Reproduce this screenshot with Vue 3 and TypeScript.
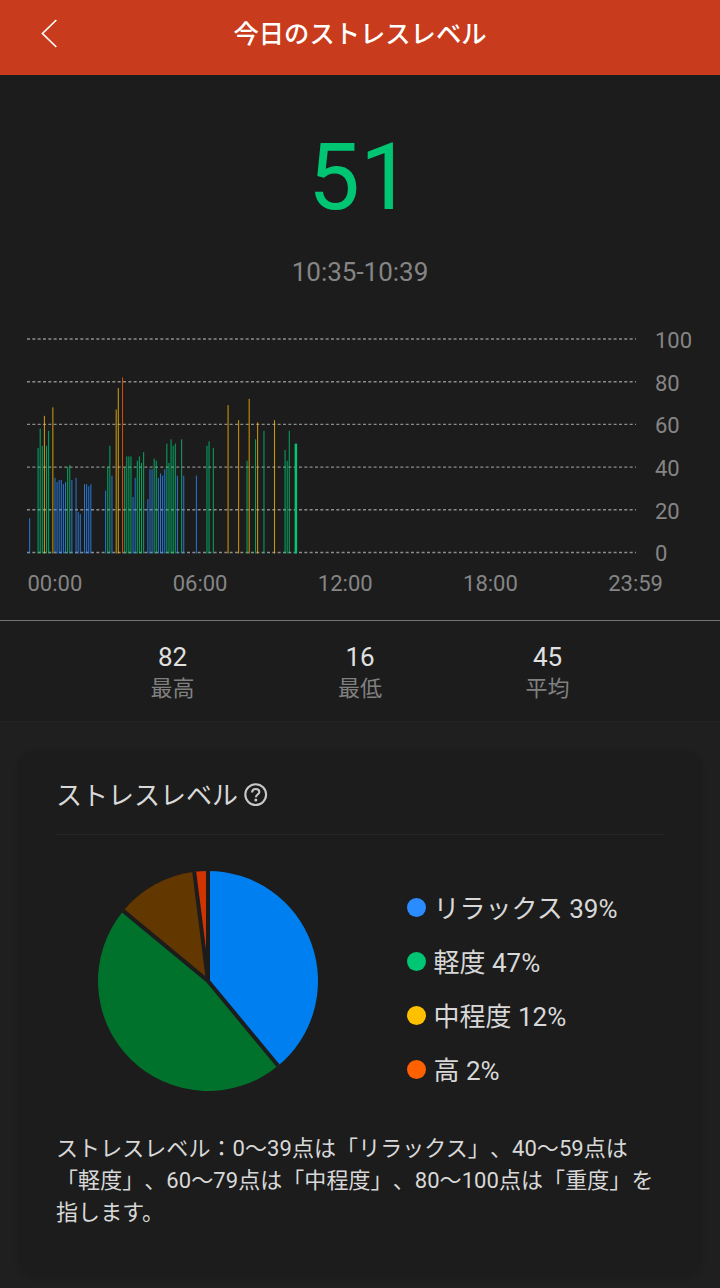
<script setup lang="ts">
type Level = 'relax' | 'mild' | 'medium' | 'high'

// Readings per five-minute slot of the day: [slot, value]
const readings: [number, number][] = [
  [1, 16], [5, 49], [6, 58], [7, 50], [8, 64], [9, 50], [10, 57], [12, 68],
  [13, 35], [14, 33], [15, 34], [16, 34], [17, 32], [18, 33], [19, 40], [20, 41], [21, 34],
  [23, 35], [24, 19], [25, 18], [27, 32], [28, 32], [29, 31], [30, 32],
  [37, 29], [38, 40], [39, 50], [40, 36], [42, 67], [43, 77], [45, 82],
  [46, 40], [47, 45], [48, 45], [49, 45], [50, 26], [51, 35], [52, 43], [53, 45], [54, 42], [55, 47],
  [57, 25], [58, 39], [59, 39], [60, 44], [61, 43], [62, 35], [63, 37], [64, 36], [65, 39],
  [66, 51], [67, 42], [68, 53], [69, 50], [70, 51], [71, 36], [73, 53], [74, 36], [80, 36],
  [85, 50], [86, 52], [88, 49], [95, 69], [100, 62], [104, 43], [105, 72], [108, 53], [109, 61],
  [112, 57], [117, 62], [122, 48], [123, 43], [124, 57],
]

const levelOf = (v: number): Level =>
  v >= 80 ? 'high' : v >= 60 ? 'medium' : v >= 40 ? 'mild' : 'relax'

const unit = 2.135
const zeroY = 218.5
const bars = readings.map(([slot, value]) => ({
  x: 27 + slot * 2.111,
  y: zeroY - value * unit,
  h: value * unit + 1,
  level: levelOf(value),
}))

const ticks = [100, 80, 60, 40, 20, 0]
const gridY = (t: number) => zeroY - t * unit
const hours = ['00:00', '06:00', '12:00', '18:00', '23:59']

const stats = [
  { value: 82, label: '最高' },
  { value: 16, label: '最低' },
  { value: 45, label: '平均' },
]

const legend: { level: Level; name: string; share: number }[] = [
  { level: 'relax', name: 'リラックス', share: 39 },
  { level: 'mild', name: '軽度', share: 47 },
  { level: 'medium', name: '中程度', share: 12 },
  { level: 'high', name: '高', share: 2 },
]

const radius = 110
const point = (share: number) => {
  const a = (share / 100) * Math.PI * 2
  return { x: 112 + radius * Math.sin(a), y: 112 - radius * Math.cos(a) }
}
let total = 0
const slices = legend.map(({ level, share }) => {
  const a = point(total)
  total += share
  const b = point(total)
  return { level, a, d: `M112 112L${a.x} ${a.y}A${radius} ${radius} 0 0 1 ${b.x} ${b.y}Z` }
})
</script>

<template>
  <div class="screen">
    <header class="bar">
      <svg class="back" width="20" height="32" viewBox="0 0 20 32">
        <path d="M17.3 3L3.5 16.5L17.3 30" />
      </svg>
      <h1>今日のストレスレベル</h1>
    </header>

    <section class="current">
      <div class="score">51</div>
      <div class="period">10:35-10:39</div>
    </section>

    <section class="chart">
      <div class="plot">
        <svg width="640" height="222" viewBox="0 0 640 222">
          <line v-for="t in ticks" :key="t" class="grid" x1="27" x2="636" :y1="gridY(t)" :y2="gridY(t)" />
          <rect v-for="b in bars" :key="b.x" :class="['reading', b.level]" :x="b.x" :y="b.y" width="1.05" :height="b.h" />
          <rect class="latest" x="294.6" :y="zeroY - 51 * unit" width="2.5" :height="51 * unit + 1" />
        </svg>
        <div class="scale"><span v-for="t in ticks" :key="t">{{ t }}</span></div>
      </div>
      <div class="hours"><span v-for="h in hours" :key="h">{{ h }}</span></div>
    </section>

    <section class="stats">
      <div v-for="s in stats" :key="s.label" class="stat">
        <b>{{ s.value }}</b><span>{{ s.label }}</span>
      </div>
    </section>

    <section class="card">
      <div class="card-head">
        <h2>ストレスレベル</h2>
        <svg width="24" height="24" viewBox="0 0 24 24">
          <circle cx="11.7" cy="11.6" r="10.4" />
          <path d="M8.1 9.4C8.1 7.2 9.6 6 11.7 6S15.3 7.2 15.3 9.1C15.3 11.4 11.9 11.7 11.9 14.2" />
          <circle class="dot" cx="11.8" cy="17" r="1.5" />
        </svg>
      </div>
      <div class="breakdown">
        <svg width="224" height="224" viewBox="0 0 224 224">
          <path v-for="s in slices" :key="s.level" :class="['slice', s.level]" :d="s.d" />
          <line v-for="s in slices" :key="s.level + '-gap'" class="gap" x1="112" y1="112" :x2="s.a.x" :y2="s.a.y" />
        </svg>
        <ul>
          <li v-for="l in legend" :key="l.level">
            <i :class="l.level"></i><span>{{ l.name }} {{ l.share }}%</span>
          </li>
        </ul>
      </div>
      <p>ストレスレベル：0～39点は「リラックス」、40～59点は<br />「軽度」、60～79点は「中程度」、80～100点は「重度」を<br />指します。</p>
    </section>
  </div>
</template>

<style>
body {
  margin: 0;
  background: #1f1f1f;
}
</style>

<style scoped>
.screen {
  width: 720px;
  height: 1288px;
  overflow: hidden;
  background: #1f1f1f;
  color: #d8d8d8;
  font-family: Roboto, "Noto Sans CJK JP", sans-serif;
  text-spacing-trim: space-all;
}
.bar {
  height: 74.5px;
  background: #c83b1c;
  display: grid;
  grid-template-columns: 80px 1fr 80px;
}
.back {
  margin: 17px 0 0 39px;
  fill: none;
  stroke: #fff;
  stroke-width: 1.7;
}
h1 {
  margin: 16px 0 0;
  font-size: 25.3px;
  line-height: 38px;
  font-weight: 500;
  color: #fff;
  text-align: center;
}
.current {
  height: 255.5px;
  background: #1c1c1c;
  text-align: center;
}
.score {
  padding-top: 48px;
  font-size: 92.5px;
  line-height: 110px;
  color: #00c673;
}
.period {
  margin-top: 24px;
  font-size: 26px;
  line-height: 30px;
  color: #858585;
}
.chart {
  height: 290px;
  background: #1c1c1c;
  border-bottom: 1px solid #747474;
  color: #858585;
  font-size: 22px;
}
.plot {
  height: 238px;
  display: flex;
}
.plot > svg {
  margin-top: 4px;
}
.grid {
  stroke: #8c8c8c;
  stroke-width: 1.4;
  stroke-dasharray: 3 2.333;
}
.reading { opacity: 0.78; }
.reading.relax { fill: #2a8cff; }
.reading.mild { fill: #00c673; }
.reading.medium { fill: #ffb800; }
.reading.high { fill: #ff5a00; }
.latest { fill: #00c673; }
.scale {
  padding: 0 0 0 15px;
  display: grid;
  grid-template-rows: repeat(6, 42.7px);
  line-height: 22px;
}
.hours {
  display: flex;
  justify-content: space-between;
  padding: 3px 57px 0 27.5px;
  line-height: 26px;
}
.stats {
  height: 100px;
  background: #1c1c1c;
  border-bottom: 1px solid #232323;
  display: grid;
  grid-template-columns: repeat(3, 187.5px);
  justify-content: center;
  text-align: center;
}
.stat {
  padding-top: 20px;
  display: flex;
  flex-direction: column;
}
.stat b {
  font-size: 26px;
  line-height: 32px;
  font-weight: 400;
  color: #e0e0e0;
}
.stat span {
  font-size: 22px;
  line-height: 32px;
  color: #808080;
}
.card {
  box-sizing: border-box;
  width: 682px;
  height: 526px;
  margin: 28px 0 0 19px;
  padding: 25px 37px 0;
  border-radius: 18px;
  background: #1c1c1c;
  box-shadow: 0 2px 6px rgba(0, 0, 0, 0.12);
}
.card-head {
  height: 59px;
  border-bottom: 1px solid #262626;
  display: flex;
  gap: 6px;
}
h2 {
  margin: 1px 0 0;
  font-size: 26px;
  line-height: 40px;
  font-weight: 400;
}
.card-head svg {
  margin-top: 8px;
  fill: none;
  stroke: #c8c8c8;
  stroke-width: 2.1;
}
.card-head .dot {
  fill: #c8c8c8;
  stroke: none;
}
.breakdown {
  display: flex;
  padding: 34px 0 0 40px;
}
.slice.relax { fill: #0080f0; }
.slice.mild { fill: #00722c; }
.slice.medium { fill: #633700; }
.slice.high { fill: #d03400; }
.gap {
  stroke: #1c1c1c;
  stroke-width: 4;
}
ul {
  margin: 11px 0 0 87px;
  padding: 0;
  list-style: none;
}
li {
  display: flex;
  align-items: center;
  height: 54px;
  font-size: 26px;
  white-space: pre;
}
li span {
  padding-bottom: 2px;
}
i {
  width: 19px;
  height: 19px;
  margin-right: 7.5px;
  border-radius: 50%;
}
i.relax { background: #2a8cff; }
i.mild { background: #00c673; }
i.medium { background: #ffc000; }
i.high { background: #ff6000; }
p {
  margin: 37px 0 0;
  font-size: 22px;
  line-height: 32px;
  letter-spacing: 0.07px;
  white-space: nowrap;
}
</style>
